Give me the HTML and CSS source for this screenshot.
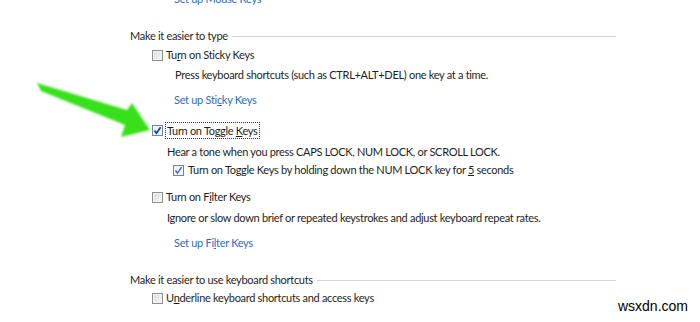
FILE: index.html
```html
<!DOCTYPE html>
<html lang="en">
    <head>
        <meta charset="UTF-8">
        <title>Make the keyboard easier to use</title>
        <link rel="stylesheet" href="styles.css">
    </head>
    <body>
        <div class="page">
            <div class="row link first">Set up Mouse Keys</div>

            <div class="row heading gap19"><span>Make it easier to type</span><span class="rule"></span></div>
            <div class="row option gap1"><span class="box"></span><span>Tu<u>r</u>n on Sticky Keys</span></div>
            <div class="row desc wide gap2">Press keyboard shortcuts (such as CTRL+ALT+DEL) one key at a time.</div>
            <div class="row link gap7">Set up Sti<u>c</u>ky Keys</div>

            <div class="row option gap12"><span class="box checked"><svg viewBox="0 0 11 11" width="11" height="11"><path d="M2.5 5.5 L4.5 8.3 L8.6 2.2" fill="none" stroke="#1c3f94" stroke-width="1.7"/></svg></span><span class="focus">Turn on Toggle <u>K</u>eys</span></div>
            <div class="row desc gap4">Hear a tone when you press CAPS LOCK, NUM LOCK, or SCROLL LOCK.</div>
            <div class="row option nested"><span class="box checked"><svg viewBox="0 0 11 11" width="11" height="11"><path d="M2.5 5.5 L4.5 8.3 L8.6 2.2" fill="none" stroke="#4a6fb8" stroke-width="1.5"/></svg></span><span>Turn on Toggle Keys by holding down the NUM LOCK key for <u>5</u> seconds</span></div>

            <div class="row option gap9"><span class="box"></span><span>Turn on F<u>i</u>lter Keys</span></div>
            <div class="row desc gap3">Ignore or slow down brief or repeated keystrokes and adjust keyboard repeat rates.</div>
            <div class="row link gap7">Set up Fi<u>l</u>ter Keys</div>

            <div class="row heading gap19"><span>Make it easier to use keyboard shortcuts</span><span class="rule"></span></div>
            <div class="row option"><span class="box"></span><span>U<u>n</u>derline keyboard shortcuts and access keys</span></div>
        </div>

        <svg class="arrow" viewBox="0 0 160 150" width="160" height="150">
            <defs>
                <filter id="soft" x="-10%" y="-10%" width="120%" height="120%">
                    <feGaussianBlur stdDeviation="0.8"/>
                </filter>
            </defs>
            <polygon points="37,83 127,110 132,103 150,130 121,137 125,125 41,91" fill="#38e01c" filter="url(#soft)"/>
        </svg>

        <div class="watermark">wsxdn.com</div>
    </body>
</html>
```

FILE: styles.css
```css
* {
    box-sizing: border-box;
}
html, body {
    margin: 0;
    height: 100%;
    overflow: hidden;
}
body {
    background: #fff;
    color: #1e1e1e;
    font-family: Lato, "Open Sans", sans-serif;
    font-size: 11px;
    letter-spacing: -0.3px;
    position: relative;
}
.page {
    padding-left: 130px;
    padding-right: 84px;
}
.row {
    height: 18px;
    line-height: 18px;
    white-space: nowrap;
}
.first {
    margin-top: -10px;
}
.gap1 { margin-top: 1px; }
.gap2 { margin-top: 2px; }
.gap3 { margin-top: 3px; }
.gap4 { margin-top: 4px; }
.gap7 { margin-top: 7px; }
.gap9 { margin-top: 9px; }
.gap12 { margin-top: 12px; }
.gap19 { margin-top: 19px; }
.heading {
    display: flex;
    align-items: center;
    gap: 4px;
}
.rule {
    flex: 1;
    height: 1px;
    background: #d5d5d5;
    margin-top: 1px;
}
.option {
    display: flex;
    align-items: center;
    gap: 3px;
    padding-left: 22px;
}
.option.nested {
    padding-left: 43px;
    gap: 4px;
}
.desc {
    padding-left: 37px;
}
.desc.wide {
    padding-left: 45px;
}
.link {
    padding-left: 44px;
    color: #2e6dbf;
}
.box {
    width: 11px;
    height: 11px;
    border: 1px solid #8e8f8f;
    background: linear-gradient(135deg, #dcdcdc, #f6f6f6);
    box-shadow: inset 0 0 0 1px #f4f4f4;
    position: relative;
    flex: none;
}
.box.checked {
    background: linear-gradient(135deg, #e4ecf7, #fbfdff);
    border-color: #6f84a8;
}
.box svg {
    position: absolute;
    left: -1px;
    top: -1px;
}
.focus {
    border: 1px dotted #333;
    line-height: 15px;
    padding: 0 1px;
    margin-left: -1px;
}
.arrow {
    position: absolute;
    left: 0;
    top: 0;
}
.watermark {
    position: absolute;
    right: 12px;
    bottom: 8px;
    font-family: "Liberation Sans", Arial, sans-serif;
    font-size: 14px;
    letter-spacing: 0;
    color: #000;
}
```
